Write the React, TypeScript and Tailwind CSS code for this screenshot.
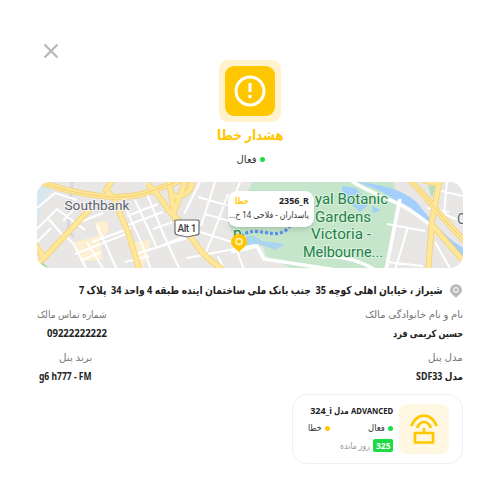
import { useLayoutEffect, useRef, useState } from "react";
import type { ReactNode } from "react";

/* Single line of text condensed or widened to the column it belongs to. */
function Fit({ w, className = "", children, ltr = false }: { w: number; className?: string; children: ReactNode; ltr?: boolean }) {
  const ref = useRef<HTMLSpanElement>(null);
  const [scale, setScale] = useState(1);
  useLayoutEffect(() => {
    if (ref.current && ref.current.offsetWidth) setScale(w / ref.current.offsetWidth);
  }, [w]);
  return (
    <span dir={ltr ? "ltr" : "rtl"} className={"flex shrink-0 whitespace-nowrap " + (ltr ? "justify-end " : "justify-start ") + className} style={{ width: w }}>
      <span ref={ref} className="block shrink-0 origin-right whitespace-pre" style={{ transform: `scaleX(${scale})` }}>{children}</span>
    </span>
  );
}

const streets =
  "M0 26L18 11L40 18M0 47L20 27L48 48M10 35L29 57M26 39L36 28M0 60L14 46M55 60L94 46M27 53L36 61L50 88M38 72L94 50M50 60L67 88M60 43L80 88M63 28L80 24M43 40L66 31M87 22L105 62L114 88M98 18L120 66M110 12L128 56L142 86M90 34L121 22M91 43L126 30M99 72L150 56M88 80L112 74M116 47L142 38M124 64L156 51M45 78L64 70M163 0L147 32M178 0L164 44M191 12L174 58M203 0L191 30M161 15L200 26M168 32L196 40M157 48L198 61M176 53L168 72M150 76L218 63M181 74L187 88M199 66L207 88M350 42L388 49M371 45L358 88M350 80L386 84M400 8L426 14M410 0L407 32L426 40M398 60L414 88M390 26L412 30";
const avenues =
  "M3 0C20 6 42 13 76 15C106 16 120 6 148 -3M76 15L69 8L76 -3M53 27L7 76L-3 84M-3 61L7 76M77 18L91 50L103 90M110 2C124 13 129 27 136 33C144 38 151 53 164 69C172 79 180 82 188 90M132 -2L137 30L149 -2M133 14C148 16 157 7 154 -2M371 -3C389 12 404 37 430 61M386 -2L402 2L395 38L391 90M395 43L430 83";

function CityMap() {
  return (
    <svg viewBox="0 0 426 86" className="block h-full w-full" direction="ltr">
      <rect width="426" height="86" fill="#e8e7e5" />
      <path d="M0 0H8L15 9L4 22L0 50Z" fill="#d8e6ef" />
      <path d="M35 0L31 48L37 55" fill="none" stroke="#d5d9df" strokeWidth="3" />
      <path d="M38 60L61 54L58 40L70 39L72 49L62 58L66 77L44 80ZM92 61L114 58L106 86H99Z" fill="#fdefd0" />
      <path d="M0 76L12 86H0Z" fill="#9bd8a8" />
      <path d="M216 0H356L363 19L348 86H250L207 78L200 62L191 40Z" fill="#c5e6ca" />
      <path d="M205 62C209 50 217 53 225 59L248 62L238 68L222 62L211 68Z" fill="#a9d5f2" />
      <path d="M185 69L226 64L229 74L262 90H190Z" fill="#e8e7e5" />
      <path d="M305 4L319 6L332 22L323 30L306 15ZM335 24L344 28L336 31Z" fill="#a3cffa" />
      <path d="M323 0C352 4 374 10 386 28C400 46 414 60 430 68V78C408 65 394 54 378 35C365 20 345 7 311 -3Z" fill="#a2cffb" />
      <path d="M371 -3C389 12 404 37 430 61V0Z" fill="#e8e7e5" />
      <path d="M360 18L348 88H426V83L395 46L374 26Z" fill="#e8e7e5" />
      <path d="M391 4L399 3L395 16Z" fill="#b6dfbc" />
      <path d={streets} fill="none" stroke="#fff" strokeWidth="2" />
      <path d="M313 -2C341 17 358 14 392 42M363 17L349 88M194 70L220 64L227 77L306 89M285 75C306 72 329 82 338 88" fill="none" stroke="#fff" strokeWidth="3.5" />
      <path d={avenues} fill="none" stroke="#f4d073" strokeWidth="6" />
      <path d={avenues} fill="none" stroke="#ffe799" strokeWidth="4.4" />
      <path d="M3 0C20 6 42 13 76 15C106 16 120 6 148 -3M371 -3C389 12 404 37 430 61" fill="none" stroke="#efc966" strokeWidth="0.8" />
      <path d="M204 54C217 44 232 54 243 51S249 42 260 43" fill="none" stroke="#5c91ed" strokeWidth="3.2" strokeDasharray="3 2" />
      <g fontFamily="Roboto, sans-serif" fill="#5c6370" stroke="#f4f4f3" strokeWidth="2" paintOrder="stroke">
        <text x="27.5" y="28" fontSize="13.5" textLength="65" lengthAdjust="spacingAndGlyphs">Southbank</text>
        <text x="420" y="42" fontSize="14">C</text>
        <g fontSize="14.5" fill="#238048" stroke="#ddf2df">
          <text x="278" y="21.5" textLength="73" lengthAdjust="spacingAndGlyphs">yal Botanic</text>
          <text x="278" y="39.5" textLength="56" lengthAdjust="spacingAndGlyphs">Gardens</text>
          <text x="274" y="57" textLength="60" lengthAdjust="spacingAndGlyphs">Victoria -</text>
          <text x="266" y="74.5" textLength="80" lengthAdjust="spacingAndGlyphs">Melbourne...</text>
          <text x="196" y="56.5" fontSize="16">n</text>
        </g>
      </g>
      <path d="M140 38H160Q163 38 162 41V51Q162 53 159 53L150 55L141 53Q138 53 138 50V41Q137 38 140 38Z" fill="#fff" stroke="#686b70" strokeWidth="1.2" />
      <text x="140.5" y="50" fontFamily="Roboto, sans-serif" fontSize="10" fontWeight="500" textLength="19" fill="#3c4043">Alt 1</text>
    </svg>
  );
}

function Pin({ className }: { className: string }) {
  return (
    <svg viewBox="0 0 16 18" className={className}>
      <path d="M8 0A8 8 0 0 0 0 8C0 12 4 14 8 18C12 14 16 12 16 8A8 8 0 0 0 8 0Z" fill="currentColor" />
      <circle cx="8" cy="7.5" r="3" fill="none" stroke="white" strokeOpacity=".8" strokeWidth="1.6" />
    </svg>
  );
}

function Field({ label, value, lw, vw, ltr = false }: { label: string; value: string; lw: number; vw: number; ltr?: boolean }) {
  return (
    <div className="flex flex-col items-start">
      <Fit w={lw} className="h-5 items-center text-[10px] text-[#777]">{label}</Fit>
      <Fit w={vw} ltr={ltr} className="h-[17px] items-center text-[10px] font-bold text-[#222]">{value}</Fit>
    </div>
  );
}

export default function App() {
  return (
    <main dir="rtl" className="flex h-[501px] w-[500px] flex-col overflow-hidden bg-white px-[37px] font-['Noto_Sans','DejaVu_Sans',sans-serif] leading-none">
      <header className="flex h-[60px] shrink-0 justify-end pt-[43px] pl-[6px]">
        <svg viewBox="0 0 16 16" className="h-4 w-4"><path d="M1.5 1.5L14.5 14.5M14.5 1.5L1.5 14.5" stroke="#b8b8b8" strokeWidth="2.3" /></svg>
      </header>
      <section className="flex h-[122px] shrink-0 flex-col items-center">
        <div className="flex h-[62px] w-[62px] shrink-0 items-center justify-center rounded-[9px] bg-[#fff2cd]">
          <div className="flex h-[50px] w-[50px] items-center justify-center rounded-[9px] bg-[#ffc700]">
            <svg viewBox="0 0 32 32" className="h-8 w-8"><circle cx="16" cy="16" r="14" fill="none" stroke="white" strokeWidth="3" /><path d="M16 8V17M16 20V23" stroke="white" strokeWidth="3" /></svg>
          </div>
        </div>
        <Fit w={67} className="mt-[3px] h-5 items-center text-[14px] font-bold text-[#ffc700]">هشدار خطا</Fit>
        <div className="mt-[4px] ml-[1px] flex h-5 items-center gap-[3px]"><span className="h-[5px] w-[5px] rounded-full bg-[#1bdc42]" /><Fit w={20} className="text-[10px] text-[#333]">فعال</Fit></div>
      </section>
      <section className="relative h-[86px] shrink-0 overflow-hidden rounded-[14px]">
        <CityMap />
        <div className="absolute top-[9px] left-[191px] h-[36px] w-[86px] rounded-[9px] bg-white px-[5px] pt-[3px] shadow-md">
          <div className="flex h-[13px] items-center justify-between"><Fit w={30} ltr className="text-[8px] font-bold text-[#222]">2356_R</Fit><Fit w={14} className="ml-[2px] text-[9px] font-bold text-[#ffc700]">خطا</Fit></div>
          <Fit w={80} className="h-[15px] items-center text-[9px] text-[#333]">پاسداران - فلاحی 14 خ...</Fit>
        </div>
        <Pin className="absolute top-[52px] left-[194px] h-[18px] w-4 text-[#ffc700]" />
      </section>
      <div className="mt-[13px] flex h-[18px] shrink-0 items-center gap-[7px] pr-[1px]">
        <Pin className="mt-[2px] h-[14px] w-3 text-[#b8b8b8]" />
        <Fit w={364} className="-mt-[2px] text-[11px] font-bold text-[#222]">شیراز ، خیابان اهلی کوچه 35  جنب بانک ملی ساختمان اینده طبقه 4 واحد 34  پلاک 7</Fit>
      </div>
      <section className="mt-[5px] flex h-[86px] shrink-0 flex-col gap-[6px]">
        <div className="flex justify-between"><Field label="نام و نام خانوادگی مالک" value="حسین کریمی فرد" lw={98} vw={70} /><Field label="شماره تماس مالک" value="09222222222" lw={70} vw={60} /></div>
        <div className="flex justify-between"><Field label="مدل پنل" value="مدل SDF33" lw={35} vw={47} /><div className="pl-[2px]"><Field label="برند پنل" value="g6 h777 - FM" lw={33} vw={53} ltr /></div></div>
      </section>
      <section className="mt-[4px] flex h-[70px] w-[171px] shrink-0 gap-[6px] rounded-[15px] border border-[#f0f0f0] pt-[9px] pr-[13px]">
        <div className="flex h-[50px] w-[50px] shrink-0 items-center justify-center rounded-[8px] bg-[#fff7e2]">
          <svg viewBox="0 0 28 30" className="h-[30px] w-7" fill="none" stroke="#ffc700" strokeWidth="2.7"><path d="M1.2 12C7-1.8 21-1.8 26.8 12M7 14C10.5 6 17.5 6 21 14M14 14V20M5 19H23V28.5H5Z" /></svg>
        </div>
        <div className="flex w-[85px] flex-col">
          <div className="flex h-[13px] items-center gap-[2px] text-[9px] font-bold text-[#222]"><Fit w={42} ltr>ADVANCED</Fit><Fit w={15}>مدل</Fit><Fit w={22} ltr>324_i</Fit></div>
          <div className="mt-[2px] flex h-[18px] items-center justify-between text-[9px] text-[#333]">
            <span className="flex items-center gap-[3px]"><i className="h-[5px] w-[5px] rounded-full bg-[#1bdc42]" /><Fit w={17} className="-mt-[2px]">فعال</Fit></span>
            <span className="flex items-center gap-[3px]"><i className="h-[5px] w-[5px] rounded-full bg-[#ffc700]" /><Fit w={14} className="-mt-[2px]">خطا</Fit></span>
          </div>
          <div className="mt-[1px] flex h-[15px] items-center gap-[3px]"><span className="flex h-[13px] w-5 items-center justify-center rounded-[2px] bg-[#1bdc42] text-white"><Fit w={14} ltr className="text-[9px] font-bold">325</Fit></span><Fit w={30} className="-mt-[1px] text-[9px] text-[#999]">روز مانده</Fit></div>
        </div>
      </section>
    </main>
  );
}
